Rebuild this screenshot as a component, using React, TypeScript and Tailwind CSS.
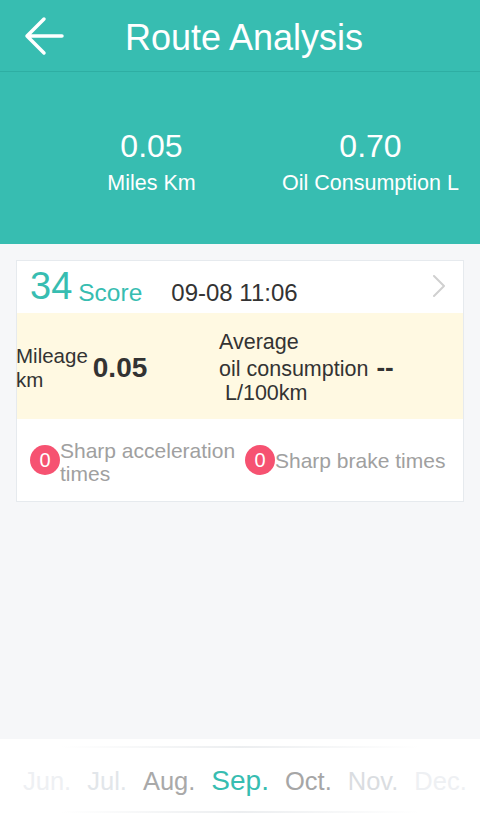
const months = [
  { label: 'Jun.', color: 'text-[#eef0f3]' },
  { label: 'Jul.', color: 'text-[#e2e6ea]' },
  { label: 'Aug.', color: 'text-[#a9a9a9]' },
  { label: 'Sep.', color: 'text-[#37bdb1] text-[28px]' },
  { label: 'Oct.', color: 'text-[#a6a6a6]' },
  { label: 'Nov.', color: 'text-[#dadde1]' },
  { label: 'Dec.', color: 'text-[#eef0f3]' },
]

export default function App() {
  return (
    <div className="min-h-[814px] flex flex-col bg-[#f6f7f9] font-[family-name:Liberation_Sans,Arial,sans-serif]">
      {/* Header */}
      <div className="h-[72px] bg-[#37bdb1] border-b border-[#2eaea3] flex items-center">
        <div className="w-[88px] pl-[24px] flex items-center">
          <svg width="40" height="40" viewBox="0 0 40 40" fill="none" stroke="white" strokeWidth="3.5" strokeLinecap="round" strokeLinejoin="round">
            <path d="M20 3 L3 20 L20 37 M3 20 H38" />
          </svg>
        </div>
        <div className="flex-1 pr-[80px] text-center text-white text-[36px] leading-none mt-[4px]">
          Route Analysis
        </div>
      </div>

      {/* Stats */}
      <div className="h-[172px] bg-[#37bdb1] flex items-center pl-[42px] pt-[6px] text-white">
        <div className="w-[222px] text-center">
          <div className="text-[32px] leading-[36px]">0.05</div>
          <div className="text-[21.5px] leading-[24px] mt-[7px]">Miles Km</div>
        </div>
        <div className="w-[222px] text-center">
          <div className="text-[32px] leading-[36px]">0.70</div>
          <div className="text-[21.5px] leading-[24px] mt-[7px]">Oil Consumption L</div>
        </div>
      </div>

      {/* Trip card */}
      <div className="mx-[16px] mt-[16px] bg-white border border-[#e6eaee]">
        <div className="h-[52px] pb-[8px] pl-[13px] flex items-end">
          <span className="text-[38px] leading-none text-[#37bdb1]">34</span>
          <span className="ml-[6px] text-[24.5px] leading-none text-[#37bdb1]">Score</span>
          <span className="ml-[29px] text-[24px] leading-none text-[#333]">09-08 11:06</span>
          <svg className="ml-auto self-start mt-[14px] mr-[17px]" width="14" height="22" viewBox="0 0 14 22" fill="none" stroke="#d0d0d0" strokeWidth="2" strokeLinecap="round" strokeLinejoin="round">
            <path d="M2 1 L12 11 L2 21" />
          </svg>
        </div>

        <div className="h-[106px] bg-[#fff9e2] flex items-center pt-[3px] text-[#333]">
          <div className="w-[202px] flex items-center">
            <div className="text-[20.5px] leading-[24px] -ml-[1px]">
              Mileage
              <br />
              km
            </div>
            <div className="ml-[5px] text-[28px] font-bold">0.05</div>
          </div>
          <div className="text-[21.5px] leading-[24px]">
            <div>Average</div>
            <div>
              oil consumption <span className="ml-[2px] text-[26px] font-bold leading-none">--</span>
            </div>
            <div className="pl-[6px]">L/100km</div>
          </div>
        </div>

        <div className="h-[82px] flex items-center pl-[13px] text-[21px] leading-[23px] text-[#a0a0a0]">
          <div className="w-[215px] flex items-center">
            <div className="w-[30px] h-[30px] shrink-0 rounded-full bg-[#f65271] text-white text-[20px] leading-none flex items-center justify-center">0</div>
            <div className="mt-[3px]">
              Sharp acceleration
              <br />
              times
            </div>
          </div>
          <div className="flex items-center">
            <div className="w-[30px] h-[30px] shrink-0 rounded-full bg-[#f65271] text-white text-[20px] leading-none flex items-center justify-center">0</div>
            <div>Sharp brake times</div>
          </div>
        </div>
      </div>

      <div className="flex-1" />

      {/* Month picker */}
      <div className="relative h-[75px] bg-white overflow-hidden">
        <div className="absolute top-[7px] left-[60px] right-[60px] h-[2px] bg-gradient-to-r from-transparent via-[#eceef0] to-transparent" />
        <div className="absolute bottom-[1px] left-[60px] right-[60px] h-[2px] bg-gradient-to-r from-transparent via-[#eceef0] to-transparent" />
        <div className="flex items-baseline gap-[16px] pl-[23px] pt-[28px] whitespace-nowrap">
          {months.map((m) => (
            <span key={m.label} className={`text-[25.5px] leading-none ${m.color}`}>
              {m.label}
            </span>
          ))}
        </div>
      </div>
    </div>
  )
}
